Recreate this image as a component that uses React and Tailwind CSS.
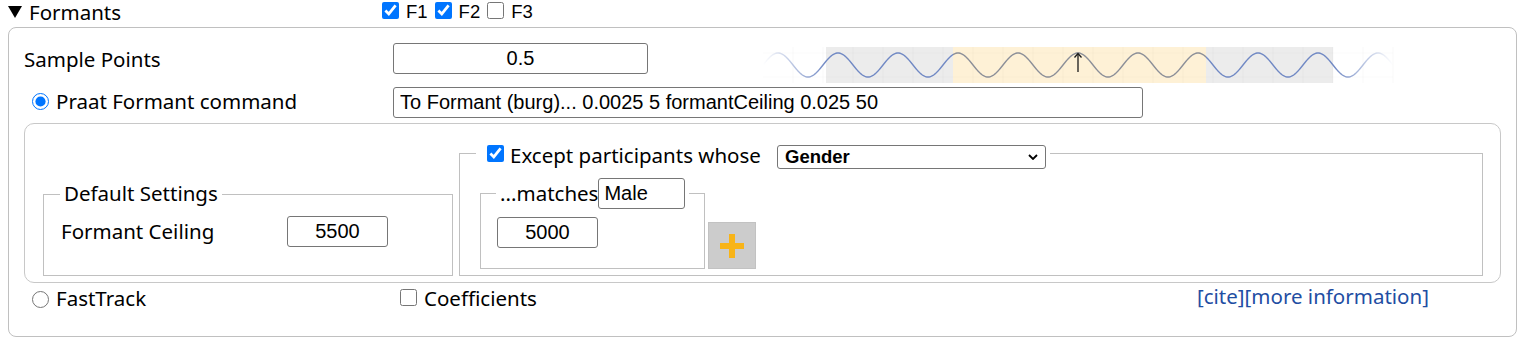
import { useId } from 'react';

const font = "font-['Noto_Sans',sans-serif] text-[20.5px] leading-[28px] whitespace-nowrap";
const label = `${font} text-black`;
const field =
  "h-[31px] rounded-[3px] border border-[#767676] bg-white font-['Liberation_Sans',Arial,sans-serif] text-[20px] text-black outline-none";
const box = 'm-0 shrink-0 accent-[#0075ff]';

function Wave() {
  const gid = useId();
  const pts = [];
  for (let x = 5; x <= 635; x += 1) {
    const y = 20 - 12 * Math.cos((2 * Math.PI * (x - 20)) / 60);
    pts.push(`${x},${y.toFixed(2)}`);
  }
  const grid = [];
  for (let x = 35; x < 640; x += 30) grid.push(x);

  return (
    <svg width="640" height="40" viewBox="0 0 640 40" className="mt-[2px] ml-[110px] shrink-0" aria-hidden="true">
      <defs>
        <linearGradient id={gid} gradientUnits="userSpaceOnUse" x1="0" y1="0" x2="640" y2="0">
          <stop offset="0.008" stopColor="#7189c4" stopOpacity="0" />
          <stop offset="0.106" stopColor="#7189c4" stopOpacity="1" />
          <stop offset="0.305" stopColor="#7189c4" />
          <stop offset="0.305" stopColor="#8c8f98" />
          <stop offset="0.7" stopColor="#8c8f98" />
          <stop offset="0.7" stopColor="#7189c4" />
          <stop offset="0.9" stopColor="#7189c4" stopOpacity="1" />
          <stop offset="0.992" stopColor="#7189c4" stopOpacity="0" />
        </linearGradient>
      </defs>
      <rect x="68" y="2" width="507" height="36" fill="#ececec" />
      <rect x="195" y="2" width="253" height="36" fill="#fef1d6" />
      {grid.map((x) => (
        <line key={x} x1={x} y1="2" x2={x} y2="38" stroke="#000" strokeOpacity="0.022" />
      ))}
      <line x1="5" y1="8" x2="635" y2="8" stroke="#000" strokeOpacity="0.02" />
      <line x1="5" y1="32" x2="635" y2="32" stroke="#000" strokeOpacity="0.02" />
      <polyline points={pts.join(' ')} fill="none" stroke={`url(#${gid})`} strokeWidth="1.4" />
      <line x1="320" y1="9" x2="320" y2="27" stroke="#1a1a1a" strokeWidth="1.3" />
      <polyline points="316.5,12.5 320,8.5 323.5,12.5" fill="none" stroke="#1a1a1a" strokeWidth="1.3" />
    </svg>
  );
}

function FormantCheck({ name, checked }) {
  return (
    <>
      <input type="checkbox" defaultChecked={checked} className={`${box} mt-[2px] h-[17px] w-[17px] self-start`} />
      <span className="ml-[7px] mr-[7px] font-['Liberation_Sans',Arial,sans-serif] text-[18.5px] leading-[24px] text-black">
        {name}
      </span>
    </>
  );
}

export default function App() {
  return (
    <div className="w-[1522px] bg-white pl-[8px] pr-[5px]">
      <div className="flex h-[24px] items-center">
        <div className="flex w-[374px] items-center">
          <svg width="14" height="12" viewBox="0 0 14 12" aria-hidden="true">
            <polygon points="0,0 14,0 7,12" fill="#000" />
          </svg>
          <span className={`${label} ml-[7px]`}>Formants</span>
        </div>
        <FormantCheck name="F1" checked />
        <FormantCheck name="F2" checked />
        <FormantCheck name="F3" checked={false} />
      </div>

      <div className="mt-[3px] rounded-[8px] border border-[#c0c0c0] px-[15px] pt-[15px] pb-[22px]">
        {/* sample points */}
        <div className="flex items-start">
          <div className="flex h-[31px] w-[369px] items-center">
            <span className={label}>Sample Points</span>
          </div>
          <input defaultValue="0.5" className={`${field} w-[255px] text-center`} />
          <Wave />
        </div>

        {/* praat command */}
        <div className="mt-[2px] flex items-start">
          <div className="flex h-[28px] w-[369px] items-center">
            <input type="radio" name="tracker" defaultChecked className={`${box} ml-[8px] h-[17px] w-[17px]`} />
            <span className={`${label} ml-[7px]`}>Praat Formant command</span>
          </div>
          <input
            defaultValue="To Formant (burg)... 0.0025 5 formantCeiling 0.025 50"
            className={`${field} w-[750px] pl-[6px]`}
          />
        </div>

        {/* ceiling settings */}
        <div className="mt-[5px] flex items-end gap-[6px] rounded-[10px] border border-[#c8c8c8] pt-[12px] pr-[17px] pb-[6px] pl-[18px]">
          <fieldset className="w-[410px] shrink-0 border border-[#c0c0c0] px-[16px] pb-[28px]">
            <legend className={`${label} px-[4px] pb-[3px]`}>Default Settings</legend>
            <div className="mt-[6px] flex items-center">
              <span className={`${label} ml-[1px] w-[226px] pb-[2px]`}>Formant Ceiling</span>
              <input defaultValue="5500" className={`${field} w-[101px] text-center`} />
            </div>
          </fieldset>

          <fieldset className="min-w-0 flex-1 border border-[#c0c0c0] px-[16px] pb-[6px]">
            <legend className="flex h-[34px] items-start px-[4px]">
              <input type="checkbox" defaultChecked className={`${box} mt-[9px] ml-[7px] h-[17px] w-[17px]`} />
              <span className={`${label} mt-[5px] ml-[6px] w-[267px]`}>Except participants whose</span>
              <div className="relative mt-[9px]">
                <select
                  defaultValue="Gender"
                  className="h-[24px] w-[269px] appearance-none rounded-[3px] border border-[#767676] bg-white pl-[7px] font-['Liberation_Sans',Arial,sans-serif] text-[18.5px] font-bold leading-[22px] text-black outline-none"
                >
                  <option>Gender</option>
                  <option>Age</option>
                </select>
                <svg
                  width="10"
                  height="6"
                  viewBox="0 0 10 6"
                  className="pointer-events-none absolute top-[9px] right-[8px]"
                  aria-hidden="true"
                >
                  <polyline points="1,1 5,5 9,1" fill="none" stroke="#000" strokeWidth="1.8" />
                </svg>
              </div>
            </legend>

            <div className="ml-[4px] flex items-end gap-[3px] pt-[8px]">
              <fieldset className="w-[225px] shrink-0 border border-[#c0c0c0] px-[15px] pb-[20px]">
                <legend className="flex h-[31px] items-center px-[4px]">
                  <span className={`${label} pb-[2px]`}>...matches</span>
                  <input defaultValue="Male" className={`${field} w-[87px] pl-[5px]`} />
                </legend>
                <input defaultValue="5000" className={`${field} mt-[8px] ml-[1px] w-[101px] text-center`} />
              </fieldset>
              <button
                type="button"
                className="flex h-[47px] w-[48px] items-center justify-center border border-[#c2c2c2] bg-[#cccccc]"
                aria-label="Add"
              >
                <svg width="24" height="24" viewBox="0 0 24 24" aria-hidden="true">
                  <rect x="0" y="9" width="24" height="6" fill="#f8b418" />
                  <rect x="9" y="0" width="6" height="24" fill="#f8b418" />
                </svg>
              </button>
            </div>
          </fieldset>
        </div>

        {/* bottom row */}
        <div className="mt-[1px] flex h-[30px] items-center">
          <div className="flex w-[369px] items-center">
            <input type="radio" name="tracker" className={`${box} ml-[8px] h-[17px] w-[17px]`} />
            <span className={`${label} ml-[7px] pb-[2px]`}>FastTrack</span>
          </div>
          <div className="flex w-[804px] items-center">
            <input type="checkbox" className={`${box} ml-[7px] -mt-[3px] h-[17px] w-[17px]`} />
            <span className={`${label} ml-[7px] pb-[2px]`}>Coefficients</span>
          </div>
          <a href="#cite" className={`${font} -mt-[6px] text-[#1f4ea3]`}>
            [cite][more information]
          </a>
        </div>
      </div>
    </div>
  );
}
